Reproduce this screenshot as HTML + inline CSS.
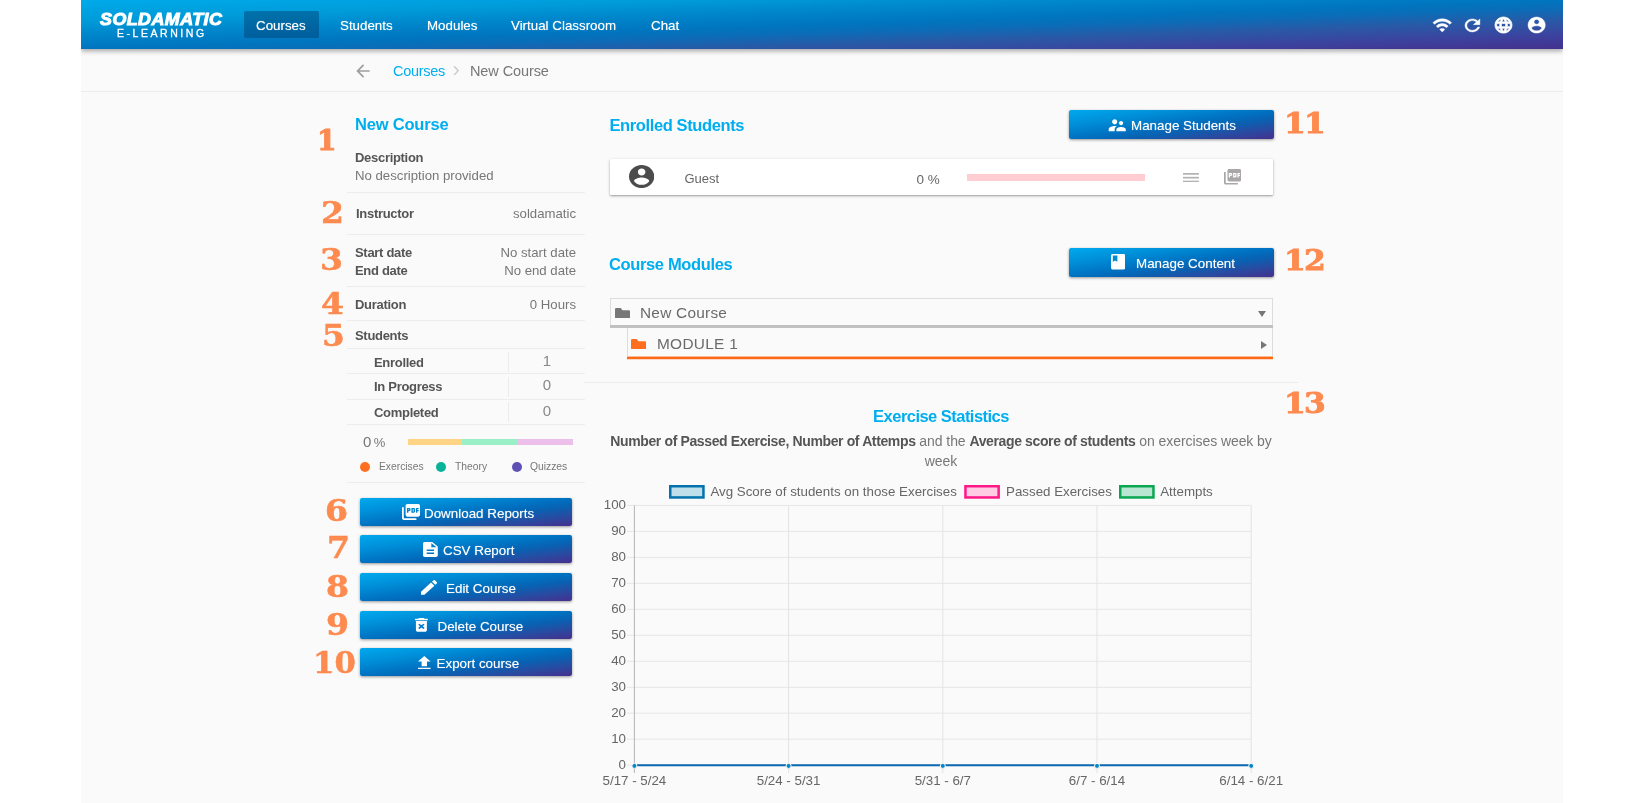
<!DOCTYPE html>
<html lang="en">
<head>
<meta charset="utf-8">
<title>Soldamatic E-Learning - New Course</title>
<style>
*{box-sizing:border-box;margin:0;padding:0}
html,body{width:1644px;height:803px;overflow:hidden;background:#fff}
body{font-family:"Liberation Sans",sans-serif;color:#555;position:relative}
#app{will-change:transform;position:absolute;left:81px;top:0;width:1482px;height:803px;background:#fafafa;overflow:hidden}
.abs{position:absolute;white-space:nowrap}
svg{display:block}
/* header */
#hdr{position:absolute;left:0;top:0;width:1482px;height:49px;
 background:linear-gradient(to bottom right,#00aaea 0%,#009bd9 21%,#0088cc 34%,#0075bf 50%,#0a6db8 58%,#2959a6 71%,#3a45a0 84%,#45308e 100%);
 box-shadow:0 2px 5px rgba(0,0,0,.35);z-index:5}

#hdr .nav{position:absolute;top:0;height:49px;line-height:51.400px;color:#fff;font-size:13.35px;text-shadow:0 0 1px rgba(255,255,255,.6)}
#hdr .act{position:absolute;left:163px;top:11px;width:75px;height:27px;background:rgba(0,60,110,.45);border-radius:2px}
.logo1{position:absolute;left:19px;top:10.5px;color:#fff;font-weight:bold;font-style:italic;font-size:17px;line-height:17px;letter-spacing:.45px;-webkit-text-stroke:1px #fff;transform:scaleX(1.05);transform-origin:0 0}
.logo2{position:absolute;left:36px;top:27px;color:#fff;font-size:10.5px;line-height:12px;letter-spacing:2.55px;-webkit-text-stroke:.3px #fff}
.hic{position:absolute;fill:#fff;stroke:#fff;stroke-width:.5px;overflow:visible}
/* breadcrumb */
#bc{position:absolute;left:0;top:49px;width:1482px;height:43px;border-bottom:1px solid #ececec;background:#fafafa}
/* text styles */
.h2{color:#00aeef;font-weight:bold;font-size:16.5px;letter-spacing:-.2px}
.lb{font-weight:bold;color:#555;font-size:13px;letter-spacing:-.3px}
.val{color:#777;font-size:13.2px;letter-spacing:0}
.hr{position:absolute;height:1px;background:#ececec}
.num{position:absolute;transform:scaleX(1.14);transform-origin:0 0;color:#fd8a4f;font-family:"DejaVu Serif",serif;font-weight:bold;-webkit-text-stroke:.5px #fd8a4f;white-space:nowrap}
.num2{position:absolute;transform:scale(1.18,1.03);transform-origin:0 0;color:#fd8a4f;font-family:"DejaVu Serif",serif;font-weight:bold;-webkit-text-stroke:.8px #fd8a4f;white-space:nowrap}
.btn{position:absolute;height:29px;border-radius:2px;color:#fff;font-size:13.4px;
 background:linear-gradient(to bottom right,#00a9ee 0%,#0091da 24%,#0071c1 50%,#0a60b1 65%,#274ca2 80%,#45308e 100%);
 box-shadow:0 1px 3px rgba(0,0,0,.4)}
.btn span{position:absolute;top:0;line-height:32px;white-space:nowrap;text-shadow:0 0 1px rgba(255,255,255,.5)}
.btn svg{position:absolute;fill:#fff}
.lb2{height:28px}
.lb2 span{line-height:31.500px}

.r{text-align:right}
.cnt{font-size:15px;line-height:18px;color:#888;width:38px;text-align:center}
.vr{position:absolute;width:1px;height:20px;background:#ececec}
.dot{position:absolute;top:462px;width:10px;height:10px;border-radius:50%}
.lg{top:460px;font-size:10.3px;line-height:14px;color:#777}

.card{position:absolute;background:#fff;box-shadow:0 1px 3px rgba(0,0,0,.3),0 1px 1px rgba(0,0,0,.12);border-radius:1px}
b{color:#555;letter-spacing:-.37px}
</style>
</head>
<body>
<div id="app">
  <div id="hdr">
    <div class="logo1">SOLDAMATIC</div>
    <div class="logo2">E-LEARNING</div>
    <div class="act"></div>
    <div class="nav" style="left:175px">Courses</div>
    <div class="nav" style="left:259px">Students</div>
    <div class="nav" style="left:346px">Modules</div>
    <div class="nav" style="left:430px">Virtual Classroom</div>
    <div class="nav" style="left:570px">Chat</div>
    <svg class="hic" style="left:1350.600px;top:14.800px;width:20.500px;height:20.400px" viewBox="0 0 24 24"><path d="M1 9l2 2c4.97-4.97 13.03-4.97 18 0l2-2C16.93 2.93 7.08 2.93 1 9zm8 8l3 3 3-3c-1.65-1.66-4.34-1.66-6 0zm-4-4l2 2c2.76-2.76 7.24-2.76 10 0l2-2C15.14 9.14 8.87 9.14 5 13z"/></svg>
    <svg class="hic" style="left:1384.200px;top:19.100px;width:14.900px;height:12.900px" viewBox="4 4 16 16" preserveAspectRatio="none"><path d="M17.65 6.35C16.2 4.9 14.21 4 12 4c-4.42 0-7.99 3.58-7.99 8s3.57 8 7.99 8c3.73 0 6.84-2.55 7.73-6h-2.08c-.82 2.33-3.04 4-5.65 4-3.31 0-6-2.69-6-6s2.69-6 6-6c1.66 0 3.14.69 4.22 1.78L13 11h7V4l-2.35 2.35z"/></svg>
    <svg class="hic" style="left:1413.800px;top:17.200px;width:17px;height:16.100px;stroke-width:.9px" viewBox="2 2 20 20" preserveAspectRatio="none"><path d="M11.99 2C6.47 2 2 6.48 2 12s4.47 10 9.99 10C17.52 22 22 17.52 22 12S17.52 2 11.99 2zm6.93 6h-2.95c-.32-1.25-.78-2.45-1.38-3.56 1.84.63 3.37 1.91 4.33 3.56zM12 4.04c.83 1.2 1.48 2.53 1.91 3.96h-3.82c.43-1.43 1.08-2.76 1.91-3.96zM4.26 14C4.1 13.36 4 12.69 4 12s.1-1.36.26-2h3.38c-.08.66-.14 1.32-.14 2 0 .68.06 1.34.14 2H4.26zm.82 2h2.95c.32 1.25.78 2.45 1.38 3.56-1.84-.63-3.37-1.9-4.33-3.56zm2.95-8H5.08c.96-1.66 2.49-2.93 4.33-3.56C8.81 5.55 8.35 6.75 8.03 8zM12 19.96c-.83-1.2-1.48-2.53-1.91-3.96h3.82c-.43 1.43-1.08 2.76-1.91 3.96zM14.34 14H9.66c-.09-.66-.16-1.32-.16-2 0-.68.07-1.35.16-2h4.68c.09.65.16 1.32.16 2 0 .68-.07 1.34-.16 2zm.25 5.56c.6-1.11 1.06-2.31 1.38-3.56h2.95c-.96 1.65-2.49 2.93-4.33 3.56zM16.36 14c.08-.66.14-1.32.14-2 0-.68-.06-1.34-.14-2h3.38c.16.64.26 1.31.26 2s-.1 1.36-.26 2h-3.38z"/></svg>
    <svg class="hic" style="left:1446.900px;top:17.200px;width:17.300px;height:16.100px" viewBox="2 2 20 20" preserveAspectRatio="none"><path d="M12 2C6.48 2 2 6.48 2 12s4.48 10 10 10 10-4.48 10-10S17.52 2 12 2zm0 3c1.66 0 3 1.34 3 3s-1.34 3-3 3-3-1.34-3-3 1.34-3 3-3zm0 14.2c-2.5 0-4.71-1.28-6-3.220.03-1.990 4-3.080 6-3.080 1.990 0 5.970 1.090 6 3.080-1.290 1.940-3.500 3.220-6 3.220z"/></svg>
  </div>
  <div id="bc">
    <svg class="abs" style="left:272.200px;top:12.300px;width:20px;height:20px;fill:#9e9e9e" viewBox="0 0 24 24"><path d="M20 11H7.83l5.590-5.590L12 4l-8 8 8 8 1.410-1.410L7.830 13H20v-2z"/></svg>
    <div class="abs" style="left:312px;top:13px;font-size:14.5px;line-height:18px;color:#00aeef;letter-spacing:-.3px">Courses</div>
    <div class="abs" style="left:371.500px;top:9.500px;font-size:22px;line-height:22px;color:#cfcfcf">&#8250;</div>
    <div class="abs" style="left:389px;top:13px;font-size:14.5px;line-height:18px;color:#777;letter-spacing:-.1px">New Course</div>
  </div>

  <!-- LEFT PANEL (coordinates relative to #app: x-81) -->
  <div class="num" style="transform:none;-webkit-text-stroke-width:1px;left:236px;top:125px;font-size:28px;line-height:32px">1</div>
  <div class="abs h2" style="left:274px;top:114px;line-height:20px">New Course</div>
  <div class="abs lb" style="left:274px;top:150px;line-height:15px">Description</div>
  <div class="abs val" style="left:274px;top:168px;line-height:15px">No description provided</div>
  <div class="hr" style="left:266px;top:192px;width:238px"></div>

  <div class="num" style="left:239.5px;top:196.5px;font-size:29px;line-height:32px">2</div>
  <div class="abs lb" style="left:275px;top:206px;line-height:15px">Instructor</div>
  <div class="abs val r" style="right:987px;top:206px;line-height:15px">soldamatic</div>
  <div class="hr" style="left:266px;top:234px;width:238px"></div>

  <div class="num" style="left:239px;top:244px;font-size:29px;line-height:32px">3</div>
  <div class="abs lb" style="left:274px;top:245px;line-height:15px">Start date</div>
  <div class="abs val r" style="right:987px;top:245px;line-height:15px">No start date</div>
  <div class="abs lb" style="left:274px;top:263px;line-height:15px">End date</div>
  <div class="abs val r" style="right:987px;top:263px;line-height:15px">No end date</div>
  <div class="hr" style="left:266px;top:286px;width:238px"></div>

  <div class="num" style="left:240px;top:288px;font-size:29px;line-height:32px">4</div>
  <div class="abs lb" style="left:274px;top:297px;line-height:15px">Duration</div>
  <div class="abs val r" style="right:987px;top:297px;line-height:15px">0 Hours</div>
  <div class="hr" style="left:266px;top:320px;width:238px"></div>

  <div class="num" style="left:241px;top:320px;font-size:29px;line-height:32px">5</div>
  <div class="abs lb" style="left:274px;top:328px;line-height:15px">Students</div>
  <div class="hr" style="left:266px;top:348px;width:238px"></div>

  <div class="abs lb" style="left:293px;top:355px;line-height:15px">Enrolled</div>
  <div class="abs cnt" style="left:447px;top:352.300px">1</div>
  <div class="vr" style="left:427px;top:352px"></div>
  <div class="hr" style="left:266px;top:373px;width:238px"></div>
  <div class="abs lb" style="left:293px;top:379px;line-height:15px">In Progress</div>
  <div class="abs cnt" style="left:447px;top:376.300px">0</div>
  <div class="vr" style="left:427px;top:377px"></div>
  <div class="hr" style="left:266px;top:399px;width:238px"></div>
  <div class="abs lb" style="left:293px;top:405px;line-height:15px">Completed</div>
  <div class="abs cnt" style="left:447px;top:402.300px">0</div>
  <div class="vr" style="left:427px;top:402px"></div>
  <div class="hr" style="left:266px;top:424px;width:238px"></div>

  <div class="abs" style="left:282px;top:432.700px;line-height:18px;font-size:15px;color:#777">0<span style="font-size:13px;margin-left:2.500px">%</span></div>
  <div class="abs" style="left:327px;top:439px;width:165px;height:6px;opacity:.96;background:linear-gradient(90deg,#ffd27f 0,#ffd27f 33%,#97efc4 33%,#97efc4 66.5%,#ebbde9 66.5%)"></div>
  <div class="dot" style="left:279px;background:#ff6f22"></div>
  <div class="abs lg" style="left:298px">Exercises</div>
  <div class="dot" style="left:355px;background:#06b398"></div>
  <div class="abs lg" style="left:374px">Theory</div>
  <div class="dot" style="left:431px;background:#5e50b5"></div>
  <div class="abs lg" style="left:449px">Quizzes</div>
  <div class="hr" style="left:266px;top:482px;width:238px"></div>

  <div class="num" style="left:244px;top:495px;font-size:29px;line-height:32px">6</div>
  <div class="btn lb2" style="left:279px;top:498px;width:212px">
    <svg style="left:42px;top:5.900px;width:18px;height:15.900px" viewBox="2 2 20 20" preserveAspectRatio="none"><path d="M20 2H8c-1.100 0-2 .900-2 2v12c0 1.100.900 2 2 2h12c1.100 0 2-.900 2-2V4c0-1.100-.900-2-2-2zm-8.500 7.500c0 .830-.670 1.500-1.500 1.500H9v2H7.500V7H10c.830 0 1.500.670 1.500 1.500v1zm5 2c0 .830-.670 1.500-1.500 1.500h-2.500V7H15c.830 0 1.500.670 1.500 1.500v3zm4-3H19v1h1.500V11H19v2h-1.500V7h3v1.500zM9 9.500h1v-1H9v1zM4 6H2v14c0 1.100.900 2 2 2h14v-2H4V6zm10 5.500h1v-3h-1v3z"/></svg>
    <span style="left:64px">Download Reports</span>
  </div>
  <div class="num" style="left:245.5px;top:532px;font-size:29px;line-height:32px">7</div>
  <div class="btn lb2" style="left:279px;top:535px;width:212px">
    <svg style="left:63px;top:7.200px;width:14.800px;height:14.900px" viewBox="4 2 16 20" preserveAspectRatio="none"><path d="M14 2H6c-1.100 0-1.990.900-1.990 2L4 20c0 1.100.890 2 1.990 2H18c1.100 0 2-.900 2-2V8l-6-6zm2 16H8v-2h8v2zm0-4H8v-2h8v2zm-3-5V3.500L18.500 9H13z"/></svg>
    <span style="left:83px">CSV Report</span>
  </div>
  <div class="num" style="left:245px;top:571px;font-size:29px;line-height:32px">8</div>
  <div class="btn lb2" style="left:279px;top:573px;width:212px">
    <svg style="left:60.800px;top:7px;width:16.300px;height:14.800px" viewBox="3 3 18 18" preserveAspectRatio="none"><path d="M3 17.250V21h3.750L17.810 9.940l-3.750-3.750L3 17.250zM20.710 7.040c.390-.390.390-1.020 0-1.410l-2.340-2.340c-.390-.390-1.020-.390-1.410 0l-1.830 1.830 3.750 3.750 1.830-1.830z"/></svg>
    <span style="left:86px">Edit Course</span>
  </div>
  <div class="num" style="left:244.5px;top:609px;font-size:29px;line-height:32px">9</div>
  <div class="btn lb2" style="left:279px;top:611px;width:212px">
    <svg style="left:55px;top:7.100px;width:12.800px;height:13.700px" viewBox="5 3 14 18" preserveAspectRatio="none"><path d="M6 19c0 1.100.900 2 2 2h8c1.100 0 2-.900 2-2V7H6v12zm2.460-7.120l1.410-1.410L12 12.590l2.120-2.120 1.410 1.410L13.410 14l2.120 2.120-1.410 1.410L12 15.410l-2.120 2.120-1.410-1.410L10.590 14l-2.130-2.120zM15.500 4l-1-1h-5l-1 1H5v2h14V4z"/></svg>
    <span style="left:77.500px">Delete Course</span>
  </div>
  <div class="num" style="transform:scaleX(1.06);left:232px;top:647px;font-size:29px;line-height:32px">10</div>
  <div class="btn lb2" style="left:279px;top:648px;width:212px">
    <svg style="left:58px;top:7.800px;width:12.600px;height:13.300px" viewBox="5 3 14 17" preserveAspectRatio="none"><path d="M9 16h6v-6h4l-7-7-7 7h4zm-4 2h14v2H5z"/></svg>
    <span style="left:76.500px">Export course</span>
  </div>

  <!-- RIGHT COLUMN -->
  <div class="abs h2" style="left:528.5px;top:114.5px;line-height:20px;letter-spacing:-.39px">Enrolled Students</div>
  <div class="btn" style="left:988px;top:110px;width:205px">
    <svg style="left:38px;top:5px;width:20.500px;height:20.500px" viewBox="0 0 24 24"><path d="M16.5 12c1.380 0 2.490-1.120 2.490-2.500S17.880 7 16.500 7C15.120 7 14 8.120 14 9.500s1.120 2.500 2.500 2.500zM9 11c1.660 0 2.990-1.340 2.990-3S10.660 5 9 5C7.340 5 6 6.340 6 8s1.340 3 3 3zm7.500 3c-1.830 0-5.500.920-5.500 2.750V19h11v-2.250c0-1.830-3.670-2.750-5.500-2.750zM9 13c-2.330 0-7 1.170-7 3.500V19h7v-2.250c0-.850.330-2.340 2.370-3.470C10.500 13.100 9.660 13 9 13z"/></svg>
    <span style="left:62px">Manage Students</span>
  </div>
  <div class="num2" style="left:1203.400px;top:104.500px;font-size:26.500px;line-height:36px;letter-spacing:-1.500px">11</div>

  <div class="card" style="left:528.5px;top:159px;width:663.500px;height:36px">
    <svg class="abs" style="left:19.500px;top:6.100px;width:25.300px;height:23.100px;fill:#4c4c4c" viewBox="2 2 20 20" preserveAspectRatio="none"><path d="M12 2C6.48 2 2 6.48 2 12s4.480 10 10 10 10-4.480 10-10S17.520 2 12 2zm0 3c1.660 0 3 1.340 3 3s-1.340 3-3 3-3-1.340-3-3 1.340-3 3-3zm0 14.200c-2.500 0-4.710-1.280-6-3.220.030-1.990 4-3.080 6-3.080 1.990 0 5.970 1.090 6 3.080-1.290 1.940-3.500 3.220-6 3.220z"/></svg>
    <div class="abs" style="left:75px;top:11px;font-size:13px;line-height:18px;color:#666">Guest</div>
    <div class="abs" style="left:307px;top:12px;font-size:13.5px;line-height:18px;color:#666">0 %</div>
    <div class="abs" style="left:357.500px;top:15.400px;width:177.500px;height:6.200px;background:#ffcdd2"></div>
    <svg class="abs" style="left:573.500px;top:13.500px;width:15.900px;height:9.400px;fill:#b4b2b2" viewBox="0 0 15.9 9.4"><rect x="0" y="0" width="15.9" height="1.700"/><rect x="0" y="3.830" width="15.9" height="1.700"/><rect x="0" y="7.660" width="15.9" height="1.700"/></svg>
    <svg class="abs" style="left:614.400px;top:10.400px;width:17.300px;height:15.500px;fill:#a9a7a7" viewBox="2 2 20 20" preserveAspectRatio="none"><path d="M20 2H8c-1.100 0-2 .900-2 2v12c0 1.100.900 2 2 2h12c1.100 0 2-.900 2-2V4c0-1.100-.900-2-2-2zm-8.500 7.500c0 .830-.670 1.500-1.500 1.500H9v2H7.500V7H10c.830 0 1.500.670 1.500 1.500v1zm5 2c0 .830-.670 1.500-1.500 1.500h-2.500V7H15c.830 0 1.500.670 1.500 1.500v3zm4-3H19v1h1.500V11H19v2h-1.500V7h3v1.500zM9 9.500h1v-1H9v1zM4 6H2v14c0 1.100.900 2 2 2h14v-2H4V6zm10 5.500h1v-3h-1v3z"/></svg>
  </div>

  <div class="abs h2" style="left:528px;top:253.500px;line-height:20px;letter-spacing:-.36px">Course Modules</div>
  <div class="btn" style="left:988px;top:248px;width:205px">
    <svg style="left:41.800px;top:6.400px;width:14.500px;height:15.500px" viewBox="4 2 16 20" preserveAspectRatio="none"><path d="M18 2H6c-1.100 0-2 .900-2 2v16c0 1.100.900 2 2 2h12c1.100 0 2-.900 2-2V4c0-1.100-.900-2-2-2zM6 4h5v8l-2.500-1.500L6 12V4z"/></svg>
    <span style="left:67px">Manage Content</span>
  </div>
  <div class="num2" style="left:1203px;top:241.500px;font-size:26.500px;line-height:36px;letter-spacing:-1.500px">12</div>

  <div class="abs" style="left:529px;top:298px;width:663px;height:30px;border:1px solid #ddd;border-bottom:none;background:#fafafa"><div class="abs" style="left:-1px;bottom:0;width:663px;height:3px;background:#c1c1c1"></div>
    <svg class="abs" style="left:4px;top:8.900px;width:15.100px;height:10.200px;fill:#777" viewBox="0 0 15.1 10.2"><path d="M0 1.2Q0 0 1.2 0H5.200Q6.100 0 6.600 .900L7.300 2.200H13.900Q15.100 2.200 15.100 3.400V9.200Q15.100 10.200 14.100 10.200H1Q0 10.200 0 9.200Z"/></svg>
    <div class="abs" style="left:29px;top:4px;font-size:15.4px;line-height:20px;color:#6a6a6a;letter-spacing:.25px">New Course</div>
    <div class="abs" style="right:6px;top:12px;width:0;height:0;border-left:4.500px solid transparent;border-right:4.500px solid transparent;border-top:6px solid #777"></div>
  </div>
  <div class="abs" style="left:546px;top:328px;width:646px;height:32px;border:1px solid #ddd;border-top:none;border-bottom:none;background:linear-gradient(#fafafa,#fafafa) 0 0/100% 28px no-repeat"><div class="abs" style="left:-1px;bottom:0;width:646px;height:4px;background:linear-gradient(#fdb992 0,#fdb992 1px,#ff6a19 1px,#ff6a19 3px,#fbd9c6 3px,#fbd9c6 4px)"></div>
    <svg class="abs" style="left:3.200px;top:11px;width:15.100px;height:10.200px;fill:#ff6d1f" viewBox="0 0 15.1 10.2"><path d="M0 1.2Q0 0 1.2 0H5.200Q6.100 0 6.600 .900L7.300 2.200H13.900Q15.100 2.200 15.100 3.400V9.200Q15.100 10.200 14.100 10.200H1Q0 10.200 0 9.200Z"/></svg>
    <div class="abs" style="left:29px;top:5.500px;font-size:15.4px;line-height:20px;color:#6a6a6a;letter-spacing:.3px">MODULE 1</div>
    <div class="abs" style="right:5px;top:12.500px;width:0;height:0;border-top:4px solid transparent;border-bottom:4px solid transparent;border-left:6.500px solid #777"></div>
  </div>
  <div class="hr" style="left:503px;top:382px;width:714px"></div>

  <div class="num2" style="left:1203px;top:385.200px;font-size:26.500px;line-height:36px;letter-spacing:-1.500px">13</div>
  <div class="abs h2" style="left:528px;top:405.500px;width:664px;text-align:center;line-height:20px;letter-spacing:-.53px">Exercise Statistics</div>
  <div class="abs" style="left:526px;top:432.300px;width:668px;text-align:center;white-space:normal;font-size:14px;line-height:19.500px;color:#777;letter-spacing:-.07px"><b>Number of Passed Exercise, Number of Attemps</b> and the <b>Average score of students</b> on exercises week by week</div>
  <div id="chart">
    <svg class="abs" style="left:0;top:0;width:1482px;height:803px;overflow:visible" viewBox="0 0 1482 803" font-family="Liberation Sans, sans-serif" font-size="13.33" fill="#666">
    <line x1="546" x2="1170.2" y1="505.4" y2="505.4" stroke="#e6e6e6" stroke-width="1"/>
    <text x="545" y="509.2" text-anchor="end">100</text>
    <line x1="546" x2="1170.2" y1="531.4" y2="531.4" stroke="#e6e6e6" stroke-width="1"/>
    <text x="545" y="535.2" text-anchor="end">90</text>
    <line x1="546" x2="1170.2" y1="557.4" y2="557.4" stroke="#e6e6e6" stroke-width="1"/>
    <text x="545" y="561.2" text-anchor="end">80</text>
    <line x1="546" x2="1170.2" y1="583.3" y2="583.3" stroke="#e6e6e6" stroke-width="1"/>
    <text x="545" y="587.1" text-anchor="end">70</text>
    <line x1="546" x2="1170.2" y1="609.3" y2="609.3" stroke="#e6e6e6" stroke-width="1"/>
    <text x="545" y="613.1" text-anchor="end">60</text>
    <line x1="546" x2="1170.2" y1="635.3" y2="635.3" stroke="#e6e6e6" stroke-width="1"/>
    <text x="545" y="639.1" text-anchor="end">50</text>
    <line x1="546" x2="1170.2" y1="661.3" y2="661.3" stroke="#e6e6e6" stroke-width="1"/>
    <text x="545" y="665.1" text-anchor="end">40</text>
    <line x1="546" x2="1170.2" y1="687.3" y2="687.3" stroke="#e6e6e6" stroke-width="1"/>
    <text x="545" y="691.1" text-anchor="end">30</text>
    <line x1="546" x2="1170.2" y1="713.2" y2="713.2" stroke="#e6e6e6" stroke-width="1"/>
    <text x="545" y="717.0" text-anchor="end">20</text>
    <line x1="546" x2="1170.2" y1="739.2" y2="739.2" stroke="#e6e6e6" stroke-width="1"/>
    <text x="545" y="743.0" text-anchor="end">10</text>
    <line x1="546" x2="1170.2" y1="765.2" y2="765.2" stroke="#e6e6e6" stroke-width="1"/>
    <text x="545" y="769.0" text-anchor="end">0</text>
    <line x1="553.4" x2="553.4" y1="505.4" y2="773" stroke="#b5b5b5" stroke-width="1"/>
    <line x1="707.6" x2="707.6" y1="505.4" y2="773" stroke="#e3e3e3" stroke-width="1"/>
    <line x1="861.8" x2="861.8" y1="505.4" y2="773" stroke="#e3e3e3" stroke-width="1"/>
    <line x1="1016.0" x2="1016.0" y1="505.4" y2="773" stroke="#e3e3e3" stroke-width="1"/>
    <line x1="1170.2" x2="1170.2" y1="505.4" y2="773" stroke="#e3e3e3" stroke-width="1"/>
    <text x="553.4" y="784.7" text-anchor="middle">5/17 - 5/24</text>
    <text x="707.6" y="784.7" text-anchor="middle">5/24 - 5/31</text>
    <text x="861.8" y="784.7" text-anchor="middle">5/31 - 6/7</text>
    <text x="1016.0" y="784.7" text-anchor="middle">6/7 - 6/14</text>
    <text x="1170.2" y="784.7" text-anchor="middle">6/14 - 6/21</text>
    <line x1="553.4" x2="1170.2" y1="765.3" y2="765.3" stroke="#0a67b1" stroke-width="2.1"/>
    <circle cx="553.4" cy="765.9" r="2.5" fill="#0487c4" stroke="#fafafa" stroke-width="1"/>
    <circle cx="707.6" cy="765.9" r="2.5" fill="#0487c4" stroke="#fafafa" stroke-width="1"/>
    <circle cx="861.8" cy="765.9" r="2.5" fill="#0487c4" stroke="#fafafa" stroke-width="1"/>
    <circle cx="1016.0" cy="765.9" r="2.5" fill="#0487c4" stroke="#fafafa" stroke-width="1"/>
    <circle cx="1170.2" cy="765.9" r="2.5" fill="#0487c4" stroke="#fafafa" stroke-width="1"/>
    <rect x="589.25" y="486.25" width="33.2" height="11.2" fill="#bfe0eb" stroke="#0373ad" stroke-width="2.5"/>
    <text x="629.4" y="496.2">Avg Score of students on those Exercises</text>
    <rect x="884.45" y="486.25" width="33.2" height="11.2" fill="#ffcce4" stroke="#ff1888" stroke-width="2.5"/>
    <text x="925" y="496.2">Passed Exercises</text>
    <rect x="1039.25" y="486.25" width="33.2" height="11.2" fill="#b9e6d2" stroke="#0aa651" stroke-width="2.5"/>
    <text x="1079.2" y="496.2">Attempts</text>
    </svg>
  </div>
</div>
</body>
</html>
